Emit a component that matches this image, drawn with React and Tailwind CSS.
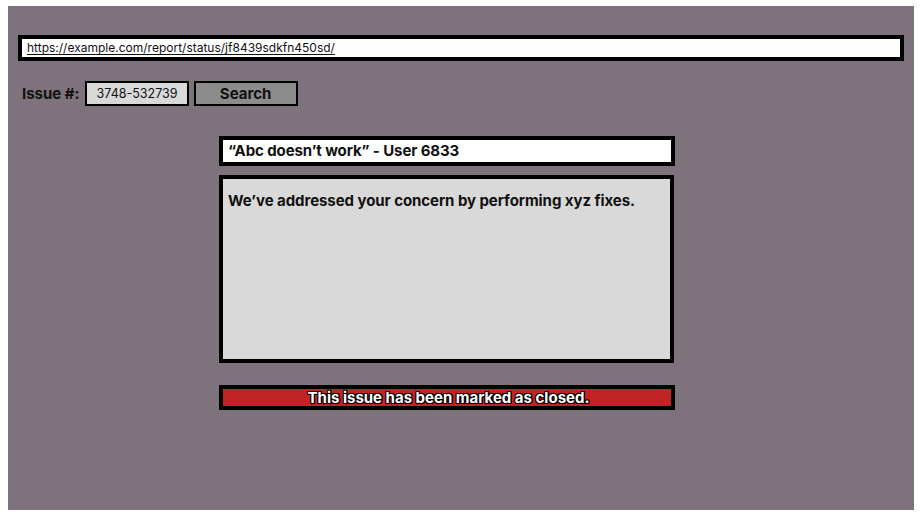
export default function App() {
  return (
    <div className="w-[922px] h-[517px] bg-white pt-[6px] pl-[8px] font-['Inter','Liberation_Sans',sans-serif]">
      <div className="w-[906px] h-[504px] bg-[#7e737c] pt-[29px] pl-[10px]">
        {/* url bar */}
        <div className="w-[886px] h-[26px] border-4 border-black bg-white flex items-center pl-[5px]">
          <span className="text-[12px] text-[#111] underline underline-offset-2 leading-none">
            https://example.com/report/status/jf8439sdkfn450sd/
          </span>
        </div>

        {/* search row */}
        <div className="flex items-center mt-[20px] h-[25px]">
          <span className="ml-[4px] text-[15px] font-bold text-[#111] pt-[2px]">Issue #:</span>
          <div className="ml-[5px] w-[104px] h-[25px] border-2 border-black bg-[#d9d9d9] flex items-center pl-[10px] pt-[2px] text-[12.5px] text-[#111]">
            3748-532739
          </div>
          <button className="ml-[5px] w-[104px] h-[25px] border-2 border-black bg-[#8c8c8c] text-[15px] font-bold text-[#111] flex items-center justify-center pt-[2px]">
            Search
          </button>
        </div>

        <div className="ml-[201px] mt-[30px] w-[456px]">
          <div className="h-[30px] border-4 border-black bg-white flex items-center pl-[5px] text-[15px] font-bold text-[#111] tracking-[-0.1px]">
            “Abc doesn’t work” - User 6833
          </div>
          <div className="mt-[9px] w-[455px] h-[188px] border-4 border-black bg-[#d9d9d9] px-[5px] pt-[11px] text-[15px] font-bold text-[#111] tracking-[-0.06px]">
            We’ve addressed your concern by performing xyz fixes.
          </div>
          <div className="mt-[22px] h-[25px] border-4 border-black bg-[#c02425] flex items-center justify-center pt-[2px] pl-[3px] text-[15px] font-bold text-white [text-shadow:-1px_0_#000,1px_0_#000,0_-1px_#000,0_1px_#000,-1px_-1px_#000,1px_1px_#000,-1px_1px_#000,1px_-1px_#000]">
            This issue has been marked as closed.
          </div>
        </div>
      </div>
    </div>
  )
}
